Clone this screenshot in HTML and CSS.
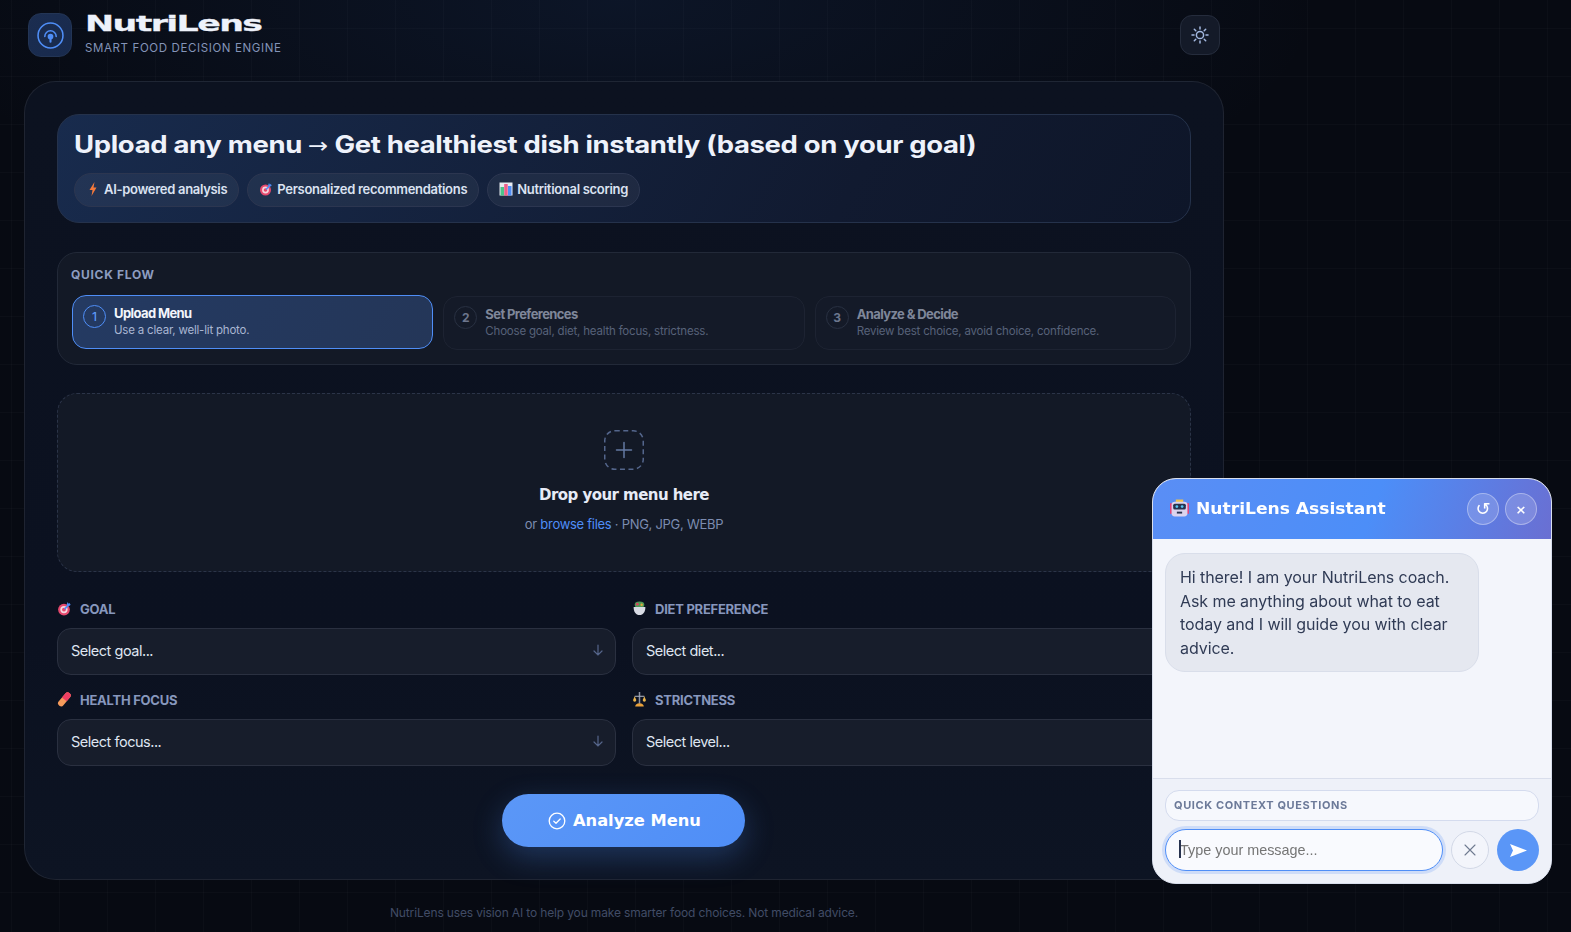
FILE: index.html
```html
<!DOCTYPE html>
<html lang="en">

<head>
	<meta charset="UTF-8">
	<title>NutriLens</title>
	<link rel="stylesheet" href="styles.css">
</head>

<body>
	<div class="page">
		<header class="topbar">
			<div class="brand">
				<div class="logo">
					<svg width="27" height="27" viewBox="0 0 26 26" fill="none" stroke="#4f8ef7" stroke-width="1.5" stroke-linecap="round">
						<circle cx="13" cy="13" r="12"/>
						<path d="M7.500 14a5.500 5.500 0 1 1 11 0"/>
						<circle cx="13" cy="14" r="2" fill="#4f8ef7"/>
						<path d="M13 15v4" stroke-width="2"/>
					</svg>
				</div>
				<div>
					<div class="brand-name">NutriLens</div>
					<div class="brand-sub">SMART FOOD DECISION ENGINE</div>
				</div>
			</div>
			<button class="theme-btn">
				<svg width="18" height="18" viewBox="0 0 18 18" fill="none" stroke="#a3b8e0" stroke-width="1.5" stroke-linecap="round">
					<circle cx="9" cy="9" r="3.600"/>
					<path d="M9 1v2M9 15v2M1 9h2M15 9h2M3.300 3.300l1.500 1.500M13.200 13.200l1.500 1.500M3.300 14.700l1.500-1.500M13.200 4.800l1.500-1.500"/>
				</svg>
			</button>
		</header>

		<main class="card">
			<section class="hero">
				<h1>Upload any menu <span class="thin-arrow">→</span> Get healthiest dish instantly (based on your goal)</h1>
				<div class="chips">
					<span class="chip">
						<svg class="emoji" width="14" height="14" viewBox="0 0 14 14"><path d="M8.500 0L3.500 8h3L5.500 14l5-8.500h-3z" fill="#f5793b"/></svg>
						AI-powered analysis
					</span>
					<span class="chip">
						<svg class="emoji" width="14" height="14" viewBox="0 0 14 14"><circle cx="6.500" cy="8" r="5.500" fill="#e5486d"/><circle cx="6.500" cy="8" r="3.400" fill="#f7d6de"/><circle cx="6.500" cy="8" r="1.800" fill="#e5486d"/><path d="M7 7.500l5-5" stroke="#4f8ef7" stroke-width="1.600"/><path d="M10 1l1 2 2 .6-2 1-2-1z" fill="#4f8ef7"/></svg>
						Personalized recommendations
					</span>
					<span class="chip">
						<svg class="emoji" width="14" height="14" viewBox="0 0 14 14"><rect x="0.500" y="0.500" width="13" height="13" fill="#e8ebf2"/><rect x="1.500" y="5" width="3.500" height="8.500" fill="#4cc38a"/><rect x="5.200" y="2" width="3.500" height="11.500" fill="#ef5f8a"/><rect x="9" y="4" width="3.500" height="9.500" fill="#4f8ef7"/></svg>
						Nutritional scoring
					</span>
				</div>
			</section>

			<section class="flow">
				<div class="flow-label">QUICK FLOW</div>
				<div class="steps">
					<div class="step active">
						<span class="step-num">1</span>
						<div>
							<div class="step-title">Upload Menu</div>
							<div class="step-desc">Use a clear, well-lit photo.</div>
						</div>
					</div>
					<div class="step">
						<span class="step-num">2</span>
						<div>
							<div class="step-title">Set Preferences</div>
							<div class="step-desc">Choose goal, diet, health focus, strictness.</div>
						</div>
					</div>
					<div class="step">
						<span class="step-num">3</span>
						<div>
							<div class="step-title">Analyze &amp; Decide</div>
							<div class="step-desc">Review best choice, avoid choice, confidence.</div>
						</div>
					</div>
				</div>
			</section>

			<section class="drop">
				<svg class="drop-icon" width="40" height="40" viewBox="0 0 40 40" fill="none" stroke="#54668c" stroke-width="1.500">
					<rect x="0.750" y="0.750" width="38.500" height="38.500" rx="10" stroke-dasharray="5 3.500"/>
					<path d="M20 12.500v15M12.500 20h15" stroke="#6479a3" stroke-linecap="round"/>
				</svg>
				<div class="drop-title">Drop your menu here</div>
				<div class="drop-sub">or <a href="#" class="browse">browse files</a> · PNG, JPG, WEBP</div>
			</section>

			<section class="fields">
				<div class="field">
					<label for="goal">
						<svg class="emoji" width="15" height="15" viewBox="0 0 14 14"><circle cx="6.500" cy="8" r="5.500" fill="#e5486d"/><circle cx="6.500" cy="8" r="3.400" fill="#f7d6de"/><circle cx="6.500" cy="8" r="1.800" fill="#e5486d"/><path d="M7 7.500l5-5" stroke="#4f8ef7" stroke-width="1.600"/><path d="M10 1l1 2 2 .6-2 1-2-1z" fill="#4f8ef7"/></svg>
						GOAL
					</label>
					<div class="select-wrap">
						<select id="goal"><option>Select goal...</option></select>
						<svg class="arrow" width="12" height="12" viewBox="0 0 12 12" fill="none" stroke="#55658a" stroke-width="1.200" stroke-linecap="round"><path d="M6 1v10M2 7l4 4 4-4"/></svg>
					</div>
				</div>
				<div class="field">
					<label for="diet">
						<svg class="emoji" width="15" height="15" viewBox="0 0 14 14"><ellipse cx="7" cy="3.500" rx="4.500" ry="3" fill="#4e9a57"/><circle cx="5" cy="3" r="1.300" fill="#d9455f"/><circle cx="9" cy="3.500" r="1.100" fill="#e5a93a"/><path d="M1.500 5.500h11c0 4.500-2 7.500-5.500 7.500s-5.500-3-5.500-7.500z" fill="#d8dbe4"/></svg>
						DIET PREFERENCE
					</label>
					<div class="select-wrap">
						<select id="diet"><option>Select diet...</option></select>
						<svg class="arrow" width="12" height="12" viewBox="0 0 12 12" fill="none" stroke="#55658a" stroke-width="1.200" stroke-linecap="round"><path d="M6 1v10M2 7l4 4 4-4"/></svg>
					</div>
				</div>
				<div class="field">
					<label for="focus">
						<svg class="emoji" width="15" height="15" viewBox="0 0 14 14"><path d="M2.500 13a2.700 2.700 0 0 1-1.200-4L7.800 1.500a2.800 2.800 0 0 1 4.400 3.500L6 12.300A2.700 2.700 0 0 1 2.500 13z" fill="#f59a5b"/><path d="M4.600 5.200L7.800 1.500a2.800 2.800 0 0 1 4.400 3.500L9 8.700z" fill="#ef3f63"/></svg>
						HEALTH FOCUS
					</label>
					<div class="select-wrap">
						<select id="focus"><option>Select focus...</option></select>
						<svg class="arrow" width="12" height="12" viewBox="0 0 12 12" fill="none" stroke="#55658a" stroke-width="1.200" stroke-linecap="round"><path d="M6 1v10M2 7l4 4 4-4"/></svg>
					</div>
				</div>
				<div class="field">
					<label for="level">
						<svg class="emoji" width="15" height="15" viewBox="0 0 14 14"><path d="M7 0v11" stroke="#8d93a3" stroke-width="1.400"/><path d="M2.500 4h9" stroke="#aab0be" stroke-width="1"/><path d="M1 7.500l1.500-3.500 1.500 3.500a1.500 1.500 0 0 1-3 0zM10 7.500l1.500-3.500 1.500 3.500a1.500 1.500 0 0 1-3 0z" fill="#e9b44c"/><path d="M3 13.500c0-1.800 1.500-3 4-3s4 1.200 4 3z" fill="#e9a13b"/></svg>
						STRICTNESS
					</label>
					<div class="select-wrap">
						<select id="level"><option>Select level...</option></select>
						<svg class="arrow" width="12" height="12" viewBox="0 0 12 12" fill="none" stroke="#55658a" stroke-width="1.200" stroke-linecap="round"><path d="M6 1v10M2 7l4 4 4-4"/></svg>
					</div>
				</div>
			</section>

			<div class="action">
				<button class="analyze-btn">
					<svg width="18" height="18" viewBox="0 0 18 18" fill="none" stroke="#fff" stroke-width="1.300" stroke-linecap="round" stroke-linejoin="round"><circle cx="9" cy="9" r="7.800"/><path d="M5.800 9.300l2.200 2 4.200-4.300"/></svg>
					<span class="analyze-text">Analyze Menu</span>
				</button>
			</div>
		</main>

		<footer class="foot">NutriLens uses vision AI to help you make smarter food choices. Not medical advice.</footer>
	</div>

	<aside class="chat">
		<div class="chat-head">
			<div class="chat-title">
				<svg width="19" height="19" viewBox="0 0 18 18"><rect x="0" y="4" width="2" height="10" fill="#e0457b"/><rect x="16" y="4" width="2" height="10" fill="#e0457b"/><rect x="5.500" y="0.500" width="7" height="3" fill="#f0c24b"/><rect x="1.500" y="2.500" width="15" height="14" rx="3" fill="#dcd4ee"/><rect x="3" y="4.500" width="12" height="5.500" rx="1.500" fill="#27324f"/><circle cx="6.500" cy="7.200" r="1.300" fill="#58c7f3"/><circle cx="11.500" cy="7.200" r="1.300" fill="#58c7f3"/><rect x="6.500" y="12" width="5" height="1.800" fill="#27324f"/></svg>
				<span class="chat-name">NutriLens Assistant</span>
			</div>
			<div class="chat-actions">
				<button class="round-btn refresh">↺</button>
				<button class="round-btn close">×</button>
			</div>
		</div>
		<div class="chat-body">
			<div class="bubble">Hi there! I am your NutriLens coach. Ask me anything about what to eat today and I will guide you with clear advice.</div>
		</div>
		<div class="chat-foot">
			<div class="context">QUICK CONTEXT QUESTIONS</div>
			<div class="input-row">
				<div class="input-wrap">
					<input type="text" class="chat-input" placeholder="Type your message...">
					<span class="caret"></span>
				</div>
				<button class="clear-btn">
					<svg width="12" height="12" viewBox="0 0 12 12" stroke="#6f7a90" stroke-width="1.100" stroke-linecap="round"><path d="M1 1l10 10M11 1L1 11"/></svg>
				</button>
				<button class="send-btn">
					<svg width="17" height="13" viewBox="0 0 17 13" fill="#fff"><path d="M0 0l17 6.500L0 13l3-6.500z"/></svg>
				</button>
			</div>
		</div>
	</aside>
</body>

</html>
```

FILE: styles.css
```css
* {
	box-sizing: border-box;
}

html,
body {
	height: 100%;
}

body {
	margin: 0;
	overflow: hidden;
	font-family: Inter, "Noto Sans", sans-serif;
	color: #e8edf8;
	background-color: #070a12;
	background-image:
		radial-gradient(ellipse 700px 260px at 620px 0, rgba(40, 80, 150, 0.16), transparent),
		linear-gradient(rgba(255, 255, 255, 0.018) 1px, transparent 1px),
		linear-gradient(90deg, rgba(255, 255, 255, 0.018) 1px, transparent 1px);
	background-size: auto, 48px 48px, 48px 48px;
	background-position: 0 0, 0 28px, 11px 0;
}

.page {
	width: 1200px;
	margin-left: 24px;
}

.topbar {
	height: 81px;
	padding: 13px 4px 0;
	display: flex;
	justify-content: space-between;
	align-items: flex-start;
}

.brand {
	display: flex;
	gap: 13px;
}

.logo {
	width: 44px;
	height: 44px;
	border-radius: 13px;
	background: linear-gradient(135deg, #1b2d50, #182a4d);
	border: 1px solid #233555;
	display: flex;
	align-items: center;
	justify-content: center;
}

.brand-name {
	font-family: "DejaVu Sans", sans-serif;
	font-weight: 700;
	font-size: 22px;
	line-height: 22px;
	letter-spacing: -1px;
	color: #eef2fb;
	white-space: nowrap;
	-webkit-text-stroke: 0.3px #eef2fb;
	transform: scaleX(1.58);
	transform-origin: left center;
}

.brand-sub {
	margin-top: 6px;
	font-size: 11.500px;
	line-height: 14px;
	letter-spacing: 0.620px;
	color: #8494b8;
}

.theme-btn {
	width: 40px;
	height: 40px;
	margin-top: 2px;
	border-radius: 12px;
	background: #141a28;
	border: 1px solid #252c3c;
	display: flex;
	align-items: center;
	justify-content: center;
	padding: 0;
}

.card {
	height: 799px;
	padding: 32px;
	border-radius: 32px;
	border: 1px solid rgba(255, 255, 255, 0.08);
	background: linear-gradient(180deg, #0c1220, #0b1120 70%, #0d1423);
}

.hero {
	height: 109px;
	padding: 15px 16px;
	border-radius: 22px;
	border: 1px solid #25324b;
	background: linear-gradient(120deg, #182b4d, #111a30 70%, #0e1629);
}

.hero h1 {
	margin: 0;
	height: 30px;
	font-size: 24px;
	line-height: 30px;
	font-weight: 700;
	letter-spacing: -0.300px;
	color: #eef2fb;
	white-space: nowrap;
	transform: scaleX(1.145);
	transform-origin: left center;
}

.thin-arrow {
	font-family: "DejaVu Sans", sans-serif;
	font-weight: 400;
	font-size: 21px;
	line-height: 1;
	letter-spacing: 0;
}

.chips {
	display: flex;
	gap: 8px;
	margin-top: 13px;
}

.chip {
	height: 34px;
	padding: 0 11px 3px 11px;
	border-radius: 17px;
	border: 1px solid #2c3650;
	background: rgba(255, 255, 255, 0.05);
	display: inline-flex;
	align-items: center;
	gap: 4px;
	font-size: 13px;
	font-weight: 600;
	letter-spacing: -0.300px;
	color: #dbe2f1;
}

.flow {
	height: 113px;
	margin-top: 29px;
	padding: 14px 13px;
	border-radius: 20px;
	border: 1px solid #222938;
	background: #131926;
}

.flow-label {
	font-size: 12px;
	line-height: 16px;
	font-weight: 700;
	letter-spacing: 0.700px;
	color: #8d9dc0;
}

.steps {
	display: grid;
	grid-template-columns: repeat(3, 1fr);
	gap: 10px;
	margin: 13px 1px 0;
}

.step {
	height: 54px;
	padding: 9px 10px;
	border-radius: 14px;
	border: 1px solid #1f2534;
	background: #151b29;
	display: flex;
	align-items: flex-start;
	gap: 8px;
	opacity: 0.9;
}

.step.active {
	transform: translateY(-1px);
	border-color: #4f8ef7;
	background: linear-gradient(120deg, #243a62, #243658);
	opacity: 1;
}

.step-num {
	flex: none;
	width: 23px;
	height: 23px;
	border-radius: 50%;
	border: 1px solid #2b3345;
	display: flex;
	align-items: center;
	justify-content: center;
	font-size: 12px;
	font-weight: 700;
	color: #778199;
}

.step.active .step-num {
	border-color: #4f8ef7;
	color: #5d98f8;
	font-weight: 500;
}

.step-title {
	font-size: 13px;
	line-height: 17px;
	font-weight: 700;
	letter-spacing: -0.600px;
	color: #8b93a6;
}

.step-desc {
	font-size: 11.500px;
	line-height: 16px;
	letter-spacing: -0.200px;
	color: #5f6a82;
}

.step.active .step-title {
	color: #f2f5fc;
}

.step.active .step-desc {
	color: #a9b6d2;
}

.drop {
	height: 179px;
	margin-top: 28px;
	padding-top: 36px;
	border-radius: 20px;
	border: 1px dashed #2b3448;
	background: #131926;
	text-align: center;
}

.drop-icon {
	display: block;
	margin: 0 auto;
}

.drop-title {
	margin-top: 14px;
	font-family: "DejaVu Sans", sans-serif;
	font-size: 15px;
	line-height: 22px;
	font-weight: 700;
	letter-spacing: -0.550px;
	color: #e6ebf6;
}

.drop-sub {
	margin-top: 9px;
	font-size: 13px;
	line-height: 18px;
	letter-spacing: -0.280px;
	color: #7c8cb0;
}

.browse {
	color: #4f8ef7;
	text-decoration: none;
}

.fields {
	display: grid;
	grid-template-columns: 1fr 1fr;
	column-gap: 16px;
	row-gap: 14px;
	margin-top: 26px;
}

.field label {
	display: flex;
	align-items: center;
	gap: 8px;
	height: 21px;
	margin-bottom: 9px;
	font-size: 13px;
	font-weight: 700;
	letter-spacing: -0.250px;
	color: #8797bd;
}

.select-wrap {
	position: relative;
}

.select-wrap select {
	display: block;
	width: 100%;
	height: 47px;
	padding: 0 13px 2px;
	appearance: none;
	border-radius: 14px;
	border: 1px solid #2a3040;
	background: #171d2b;
	color: #dfe5f1;
	font-family: Inter, "Noto Sans", sans-serif;
	font-size: 14.500px;
	letter-spacing: -0.480px;
}

.arrow {
	position: absolute;
	right: 12px;
	top: 16px;
}

.action {
	display: flex;
	justify-content: center;
	margin-top: 28px;
	padding-right: 2px;
}

.analyze-btn {
	width: 243px;
	height: 53px;
	border: 0;
	border-radius: 27px;
	background: linear-gradient(135deg, #5b97f7, #4f8ef7);
	box-shadow: 0 10px 30px rgba(79, 142, 247, 0.28);
	display: flex;
	align-items: center;
	justify-content: center;
	gap: 10px;
	font-family: "DejaVu Sans", sans-serif;
	font-size: 15.500px;
	font-weight: 700;
	color: #fff;
}

.analyze-text {
	transform: scaleX(1.05);
}

.foot {
	margin-top: 25px;
	text-align: center;
	font-size: 12px;
	line-height: 16px;
	letter-spacing: -0.140px;
	color: #414c66;
}

.chat {
	position: fixed;
	left: 1152px;
	top: 478px;
	width: 400px;
	height: 406px;
	border-radius: 24px;
	border: 1px solid #d8deec;
	background: #f3f5fb;
	overflow: hidden;
	display: flex;
	flex-direction: column;
}

.chat-head {
	height: 60px;
	padding: 0 14px 0 17px;
	display: flex;
	align-items: center;
	justify-content: space-between;
	background: linear-gradient(110deg, #5a8ef5, #4c8ef8 55%, #6a6fd2);
}

.chat-title {
	display: flex;
	align-items: center;
	gap: 7px;
	padding-bottom: 1px;
	font-family: "DejaVu Sans", sans-serif;
	font-size: 16px;
	font-weight: 700;
	color: #fff;
}

.chat-name {
	white-space: nowrap;
	transform: scaleX(1.07);
	transform-origin: left center;
}

.chat-actions {
	display: flex;
	gap: 6px;
}

.round-btn {
	width: 32px;
	height: 32px;
	padding: 0;
	border-radius: 50%;
	border: 1px solid rgba(255, 255, 255, 0.35);
	background: rgba(255, 255, 255, 0.16);
	color: #fff;
	font-family: "DejaVu Sans", sans-serif;
	font-size: 18px;
	line-height: 1;
}

.round-btn.close {
	font-size: 13px;
	font-weight: 700;
}

.chat-body {
	flex: 1;
	padding: 14px 12px;
}

.bubble {
	width: 314px;
	padding: 12px 14px 10px;
	border-radius: 20px;
	border: 1px solid #d9deea;
	background: #e5e8f0;
	font-size: 16px;
	line-height: 23.700px;
	letter-spacing: -0.070px;
	color: #303b55;
}

.chat-foot {
	padding: 11px 12px 12px;
	border-top: 1px solid #d9deec;
	background: #eef1f9;
}

.context {
	height: 31px;
	padding: 0 8px 1px;
	border-radius: 14px;
	border: 1px solid #d4dbee;
	background: #f6f8fd;
	display: flex;
	align-items: center;
	font-size: 11px;
	font-weight: 700;
	letter-spacing: 0.600px;
	color: #6c7a99;
}

.input-row {
	display: flex;
	align-items: center;
	gap: 8px;
	margin-top: 8px;
}

.input-wrap {
	position: relative;
	width: 278px;
}

.chat-input {
	display: block;
	width: 100%;
	height: 42px;
	padding: 0 14px 1px;
	border-radius: 21px;
	border: 1.500px solid #4f8ef7;
	box-shadow: 0 0 0 3px rgba(79, 142, 247, 0.2);
	outline: none;
	background: #f9fafe;
	font-family: "Liberation Sans", Arial, sans-serif;
	font-size: 14.400px;
}

.caret {
	position: absolute;
	left: 14px;
	top: 11px;
	width: 2px;
	height: 18px;
	background: #27324f;
}

.clear-btn {
	width: 38px;
	height: 38px;
	padding: 0;
	border-radius: 50%;
	border: 1px solid #d2d8e6;
	background: #f3f5fb;
	display: flex;
	align-items: center;
	justify-content: center;
}

.send-btn {
	width: 42px;
	height: 42px;
	padding: 0;
	border: 0;
	border-radius: 50%;
	background: #5a96f7;
	display: flex;
	align-items: center;
	justify-content: center;
}
```
